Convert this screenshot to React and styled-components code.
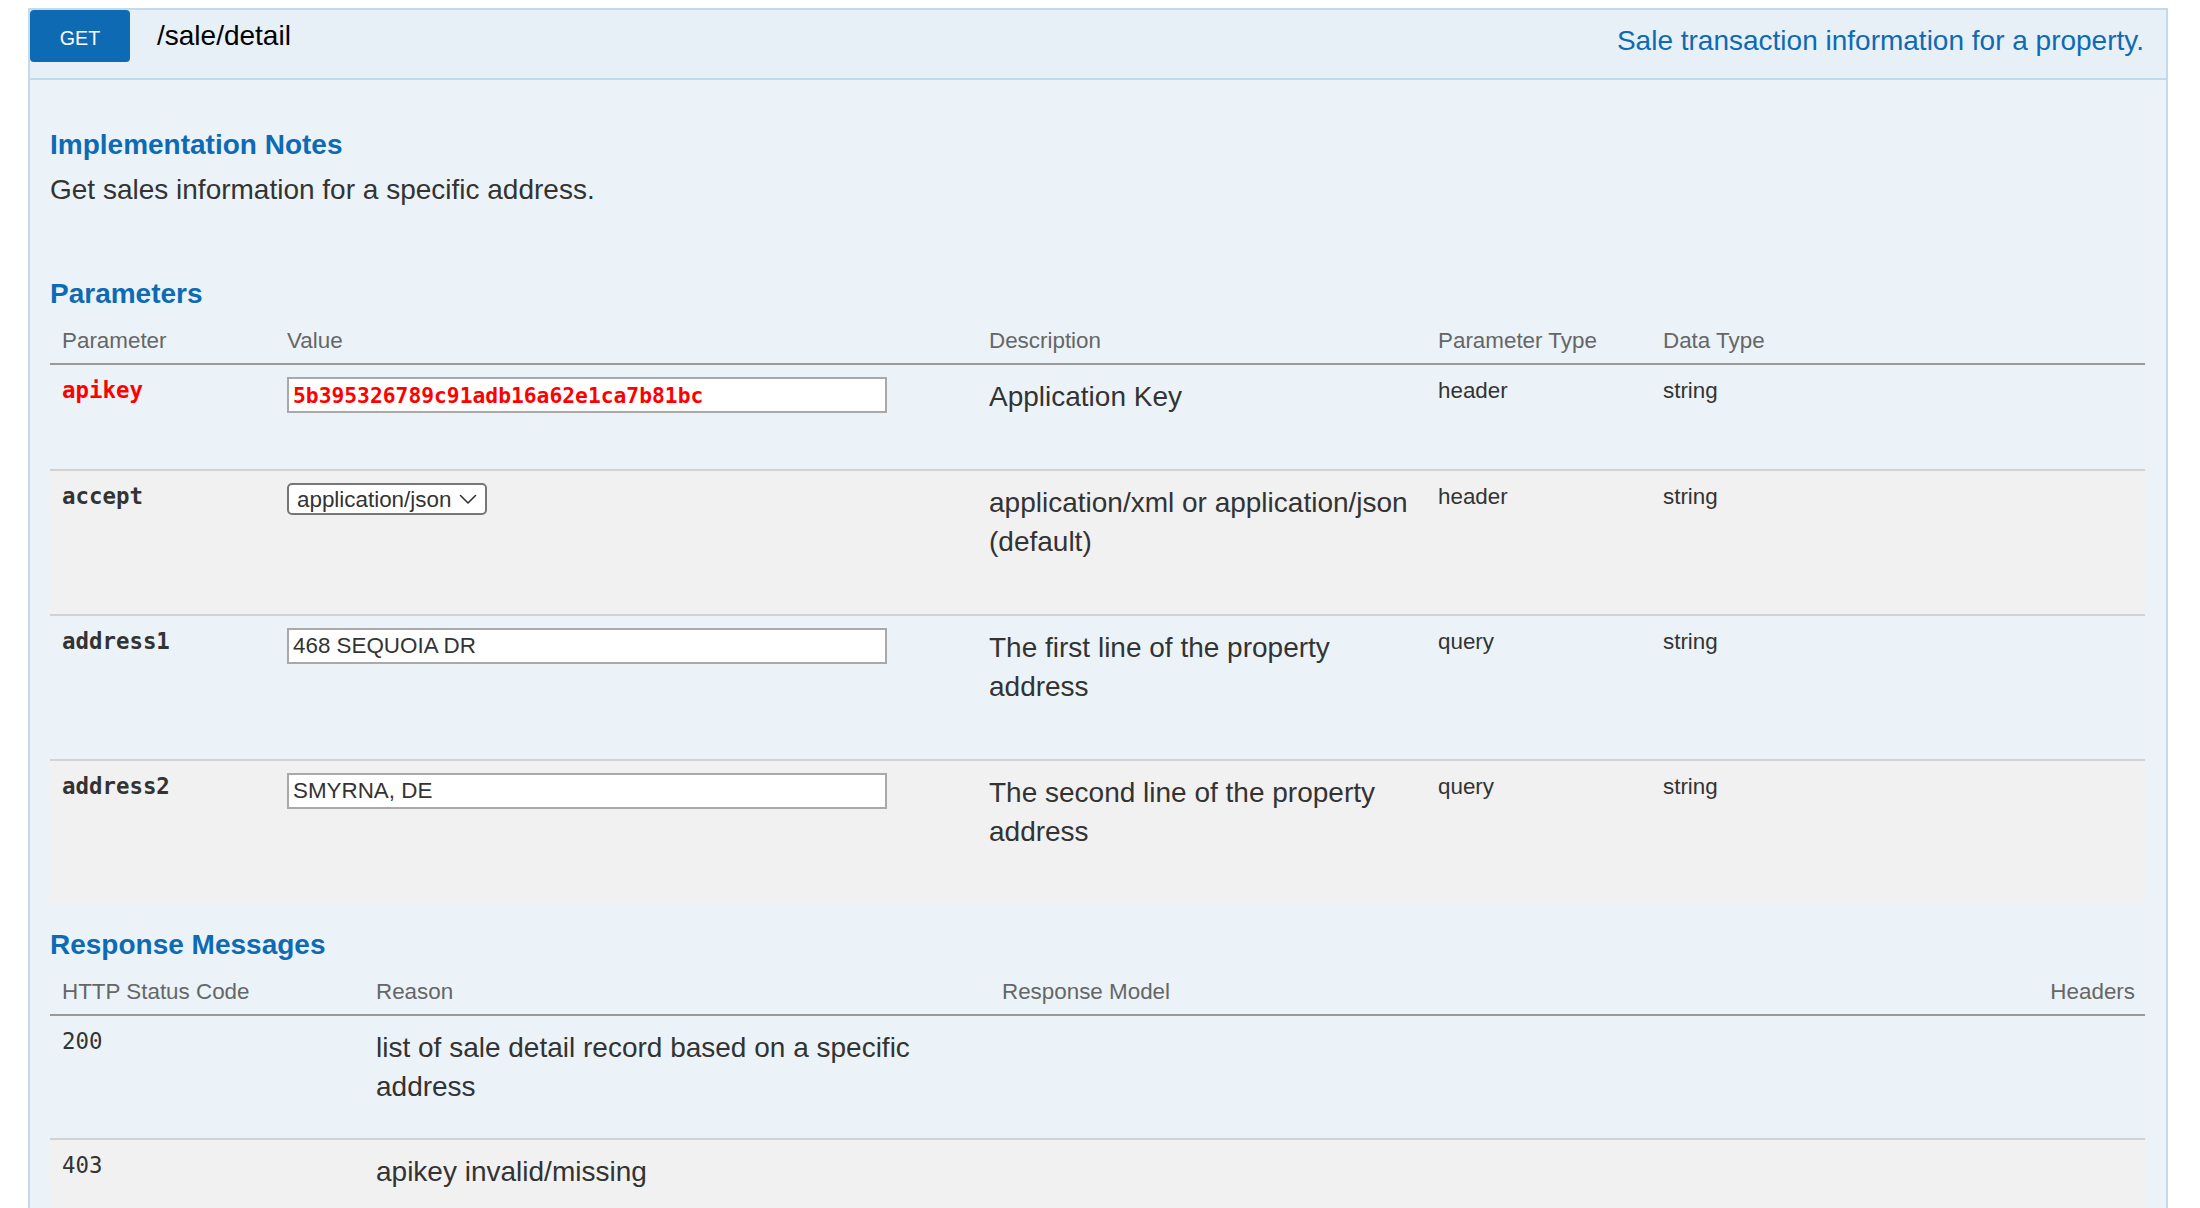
import React from "react";
import styled, { createGlobalStyle } from "styled-components";

const GlobalStyle = createGlobalStyle`
  html, body {
    margin: 0;
    overflow: hidden;
    background: #fff;
  }
  body {
    padding: 8px 32px 0 28px;
    font-family: "Liberation Sans", Arial, sans-serif;
    color: #333;
  }
`;

const Operation = styled.div`
  display: flex;
  flex-direction: column;
`;

const Heading = styled.div`
  display: flex;
  align-items: flex-start;
  padding: 0 22px 16px 0;
  background: #e7f0f7;
  border: 2px solid #c3d9ec;
`;

const Method = styled.span`
  display: flex;
  align-items: center;
  justify-content: center;
  box-sizing: border-box;
  width: 100px;
  height: 52px;
  padding-top: 4px;
  border-radius: 4px;
  background: #0f6ab4;
  color: #fff;
  font-size: 19.6px;
  text-transform: uppercase;
`;

const Path = styled.span`
  margin: 1px 0 0 27px;
  font-size: 28px;
  line-height: 50px;
  color: #000;
`;

const Summary = styled.span`
  margin: 11px 0 0 auto;
  font-size: 28px;
  line-height: 40px;
  color: #0f6ab4;
`;

const Content = styled.div`
  background: #ebf3f9;
  border: 2px solid #c3d9ec;
  border-top: none;
  padding: 0 21px 0 20px;
`;

const SectionTitle = styled.h4`
  margin: ${(p) => p.$top}px 0 0;
  font-size: 28px;
  line-height: 32px;
  font-weight: bold;
  color: #0f6ab4;
`;

const Notes = styled.p`
  margin: 9px 0 0;
  font-size: 28px;
  line-height: 39px;
  color: #333;
`;

const HeadRow = styled.div`
  display: grid;
  grid-template-columns: ${(p) => p.$cols};
  padding: 15px 0 7px;
  border-bottom: 2px solid #999;
`;

const Th = styled.div`
  padding: 0 12px;
  font-size: 22.4px;
  line-height: 31px;
  color: #666;
  text-align: ${(p) => (p.$right ? "right" : "left")};
  padding-right: ${(p) => (p.$right ? "10px" : "12px")};
`;

const Row = styled.div`
  display: grid;
  grid-template-columns: ${(p) => p.$cols};
  background: ${(p) => (p.$alt ? "#f1f1f1" : "transparent")};
  & + & {
    border-top: 2px solid #d2d2d2;
  }
`;

const Cell = styled.div`
  padding: ${(p) => p.$top ?? 12}px 12px 12px;
  font-size: 22.4px;
  line-height: 31px;
  color: #333;
`;

const Name = styled(Cell)`
  font-family: "DejaVu Sans Mono", "Liberation Mono", monospace;
  font-weight: ${(p) => (p.$plain ? "normal" : "bold")};
  color: ${(p) => (p.$required ? "#ff0000" : "#333")};
`;

const Desc = styled.p`
  margin: 0 0 ${(p) => p.$gap}px;
  font-size: 28px;
  line-height: 39px;
  color: #333;
`;

const TextInput = styled.input`
  display: block;
  box-sizing: border-box;
  width: 600px;
  height: 36px;
  margin: 0;
  padding: 0 4px;
  border: 2px solid #a9a9a9;
  background: #fff;
  outline: none;
  font-family: ${(p) =>
    p.$required
      ? `"DejaVu Sans Mono", "Liberation Mono", monospace`
      : `"Liberation Sans", Arial, sans-serif`};
  font-size: ${(p) => (p.$required ? "21.3px" : "22.4px")};
  font-weight: ${(p) => (p.$required ? "bold" : "normal")};
  color: ${(p) => (p.$required ? "#ff0000" : "#333")};
`;

const SelectBox = styled.div`
  display: flex;
  align-items: center;
  justify-content: space-between;
  box-sizing: border-box;
  width: 200px;
  height: 32px;
  padding: 0 8px 0 8px;
  border: 2px solid #767676;
  border-radius: 5px;
  background: #fff;
  font-size: 22.4px;
  color: #333;
`;

const Chevron = () => (
  <svg width="18" height="11" viewBox="0 0 18 11" fill="none">
    <polyline
      points="1.5,1.5 9,9 16.5,1.5"
      stroke="#333"
      strokeWidth="1.6"
      strokeLinecap="round"
      strokeLinejoin="round"
    />
  </svg>
);

const PARAM_COLS = "225px 702px 449px 225px 1fr";
const RESP_COLS = "314px 626px 1fr auto";

const params = [
  {
    name: "apikey",
    required: true,
    kind: "input",
    value: "5b395326789c91adb16a62e1ca7b81bc",
    desc: "Application Key",
    paramType: "header",
  },
  {
    name: "accept",
    kind: "select",
    value: "application/json",
    desc: "application/xml or application/json (default)",
    paramType: "header",
  },
  {
    name: "address1",
    kind: "input",
    value: "468 SEQUOIA DR",
    desc: "The first line of the property address",
    paramType: "query",
  },
  {
    name: "address2",
    kind: "input",
    value: "SMYRNA, DE",
    desc: "The second line of the property address",
    paramType: "query",
  },
];

const responses = [
  { code: "200", reason: "list of sale detail record based on a specific address" },
  { code: "403", reason: "apikey invalid/missing" },
];

const App = () => {
  return (
    <>
      <GlobalStyle />
      <Operation>
        <Heading>
          <Method>Get</Method>
          <Path>/sale/detail</Path>
          <Summary>Sale transaction information for a property.</Summary>
        </Heading>
        <Content>
          <SectionTitle $top={49}>Implementation Notes</SectionTitle>
          <Notes>Get sales information for a specific address.</Notes>

          <SectionTitle $top={69}>Parameters</SectionTitle>
          <HeadRow $cols={PARAM_COLS}>
            <Th>Parameter</Th>
            <Th>Value</Th>
            <Th>Description</Th>
            <Th>Parameter Type</Th>
            <Th>Data Type</Th>
          </HeadRow>
          {params.map((p, i) => (
            <Row key={p.name} $cols={PARAM_COLS} $alt={i % 2 === 1}>
              <Name $top={10} $required={p.required}>
                {p.name}
              </Name>
              <Cell>
                {p.kind === "select" ? (
                  <SelectBox>
                    <span>{p.value}</span>
                    <Chevron />
                  </SelectBox>
                ) : (
                  <TextInput
                    type="text"
                    defaultValue={p.value}
                    $required={p.required}
                  />
                )}
              </Cell>
              <Cell>
                <Desc $gap={41}>{p.desc}</Desc>
              </Cell>
              <Cell $top={10}>{p.paramType}</Cell>
              <Cell $top={10}>string</Cell>
            </Row>
          ))}

          <SectionTitle $top={25}>Response Messages</SectionTitle>
          <HeadRow $cols={RESP_COLS}>
            <Th>HTTP Status Code</Th>
            <Th>Reason</Th>
            <Th>Response Model</Th>
            <Th $right>Headers</Th>
          </HeadRow>
          {responses.map((r, i) => (
            <Row key={r.code} $cols={RESP_COLS} $alt={i % 2 === 1}>
              <Name $top={10} $plain>
                {r.code}
              </Name>
              <Cell>
                <Desc $gap={20}>{r.reason}</Desc>
              </Cell>
              <Cell />
              <Cell />
            </Row>
          ))}
        </Content>
      </Operation>
    </>
  );
};

export default App;
